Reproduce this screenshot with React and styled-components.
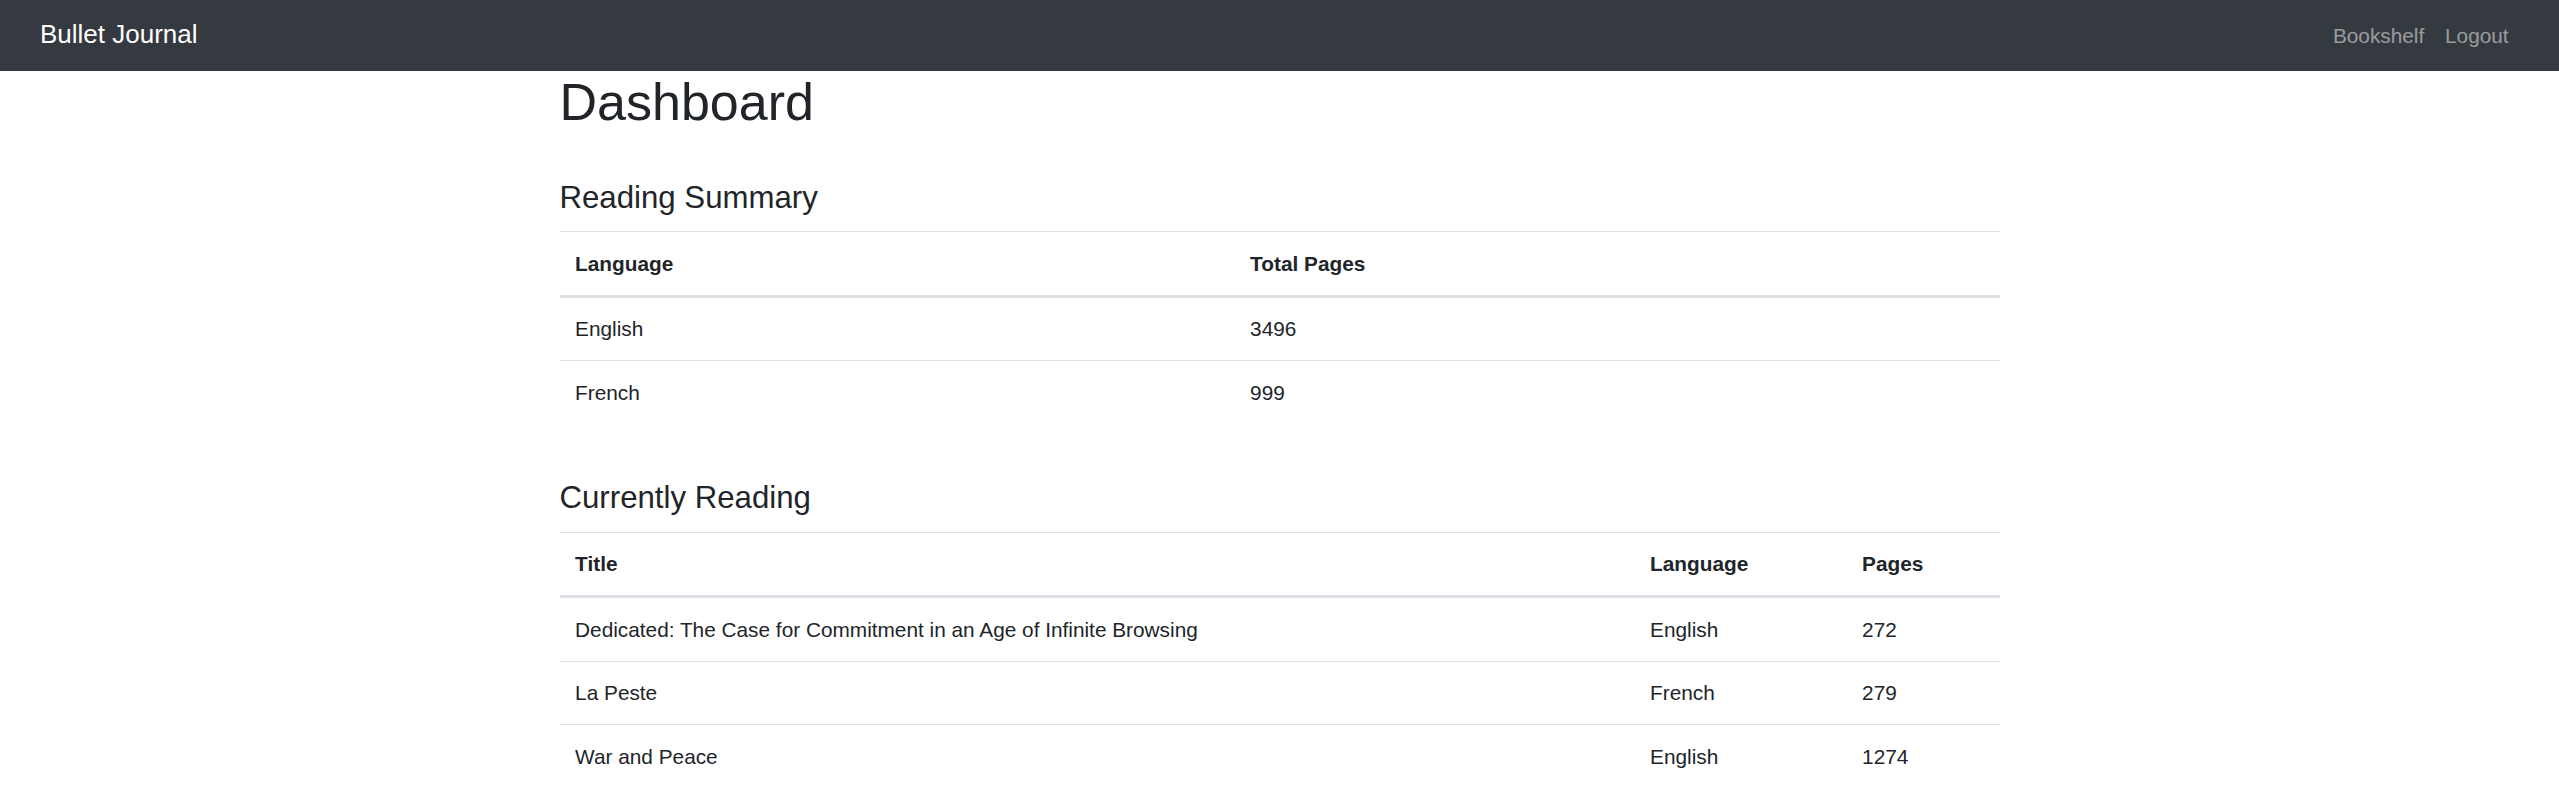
import React from 'react';
import styled, { createGlobalStyle } from 'styled-components';

const GlobalStyle = createGlobalStyle`
  html, body {
    margin: 0;
    padding: 0;
    background: #fff;
  }

  body {
    font-family: "Liberation Sans", Arial, sans-serif;
    font-size: 20.8px;
    line-height: 1.5;
    color: #212529;
  }
`;

const Navbar = styled.nav`
  height: 71px;
  background: #343a40;
  display: flex;
  align-items: center;
  justify-content: space-between;
  padding: 0 40px;
  box-sizing: border-box;
`;

const Brand = styled.a`
  color: #fff;
  font-size: 26px;
  line-height: 39px;
  text-decoration: none;
  margin-top: -2px;
`;

const NavLinks = styled.div`
  display: flex;
`;

const NavLink = styled.a`
  color: rgba(255, 255, 255, 0.5);
  font-size: 20.8px;
  line-height: 31.2px;
  padding: 10.4px;
  text-decoration: none;
`;

const Container = styled.main`
  width: 1440px;
  margin: 0 auto;
  display: flex;
  flex-direction: column;
`;

const Title = styled.h1`
  font-size: 52px;
  font-weight: 500;
  line-height: 62.4px;
  margin: 0 0 45.5px;
`;

const SectionTitle = styled.h4`
  font-size: 31.2px;
  font-weight: 500;
  line-height: 37.4px;
  margin: 0 0 15px;
`;

const Table = styled.table`
  width: 100%;
  table-layout: fixed;
  border-collapse: collapse;
  margin-bottom: 56px;
`;

const Th = styled.th`
  box-sizing: border-box;
  width: ${(p) => p.$width || 'auto'};
  text-align: left;
  font-weight: 700;
  padding: 15.6px;
  line-height: 31.2px;
  border-top: 1px solid #dee2e6;
  border-bottom: 3px solid #dee2e6;
`;

const Td = styled.td`
  padding: 15.6px;
  line-height: 31.2px;
  border-top: 1px solid #dee2e6;
`;

const summary = [
  { language: 'English', pages: 3496 },
  { language: 'French', pages: 999 },
];

const reading = [
  { title: 'Dedicated: The Case for Commitment in an Age of Infinite Browsing', language: 'English', pages: 272 },
  { title: 'La Peste', language: 'French', pages: 279 },
  { title: 'War and Peace', language: 'English', pages: 1274 },
];

export default function App() {
  return (
    <>
      <GlobalStyle />
      <Navbar>
        <Brand href="#">Bullet Journal</Brand>
        <NavLinks>
          <NavLink href="#">Bookshelf</NavLink>
          <NavLink href="#">Logout</NavLink>
        </NavLinks>
      </Navbar>
      <Container>
        <Title>Dashboard</Title>

        <SectionTitle>Reading Summary</SectionTitle>
        <Table>
          <thead>
            <tr>
              <Th $width="675px">Language</Th>
              <Th>Total Pages</Th>
            </tr>
          </thead>
          <tbody>
            {summary.map((row) => (
              <tr key={row.language}>
                <Td>{row.language}</Td>
                <Td>{row.pages}</Td>
              </tr>
            ))}
          </tbody>
        </Table>

        <SectionTitle>Currently Reading</SectionTitle>
        <Table>
          <thead>
            <tr>
              <Th $width="1075px">Title</Th>
              <Th $width="212px">Language</Th>
              <Th>Pages</Th>
            </tr>
          </thead>
          <tbody>
            {reading.map((book) => (
              <tr key={book.title}>
                <Td>{book.title}</Td>
                <Td>{book.language}</Td>
                <Td>{book.pages}</Td>
              </tr>
            ))}
          </tbody>
        </Table>
      </Container>
    </>
  );
}
